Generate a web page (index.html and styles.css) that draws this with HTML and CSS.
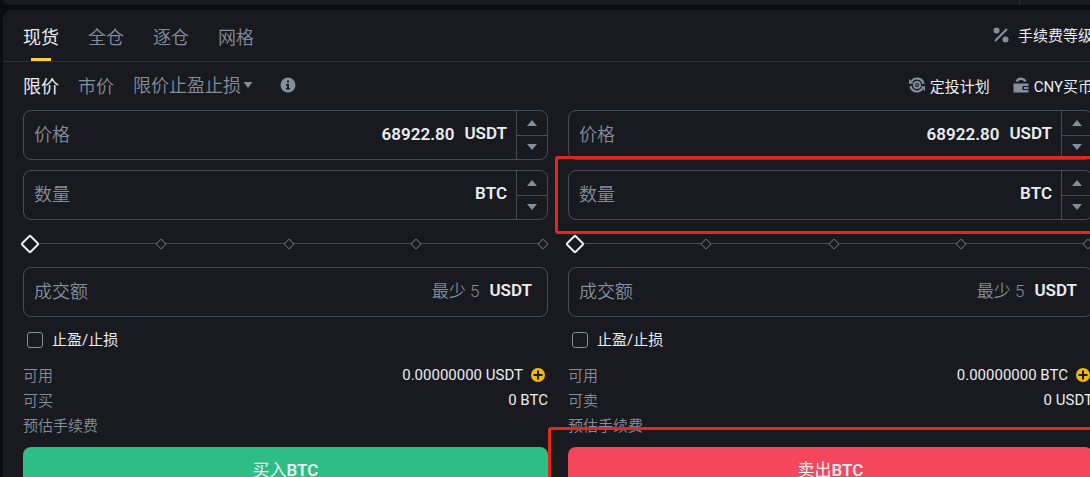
FILE: index.html
```html
<!DOCTYPE html>
<html lang="zh-CN">
<head>
  <meta charset="UTF-8">
  <meta name="viewport" content="width=device-width, initial-scale=1.0">
  <title>BTC/USDT 现货</title>
  <link rel="stylesheet" href="styles.css">
</head>
<body>
  <div class="chart-bottom"></div>
  <main class="panel">
    <nav class="tabs">
      <button class="tab active">现货</button>
      <button class="tab">全仓</button>
      <button class="tab">逐仓</button>
      <button class="tab">网格</button>
      <a class="tool push" href="#">
        <svg width="16" height="16" viewBox="0 0 16 16">
          <circle cx="3.5" cy="3.5" r="3" fill="currentColor"/>
          <circle cx="12.5" cy="12.5" r="3" fill="currentColor"/>
          <path d="M2 14L14 2" stroke="currentColor" stroke-width="2.2"/>
        </svg>
        手续费等级
      </a>
    </nav>
    <div class="order-types">
      <button class="type active">限价</button>
      <button class="type">市价</button>
      <div class="type-select">
        <select aria-label="订单类型">
          <option>限价止盈止损</option>
          <option>跟踪委托</option>
          <option>OCO</option>
        </select>
        <svg width="10" height="6" viewBox="0 0 10 6"><path d="M0.5 0h9L5 6z" fill="currentColor"/></svg>
      </div>
      <button class="info" aria-label="说明">
        <svg width="16" height="16" viewBox="0 0 16 16">
          <circle cx="8" cy="8" r="7.5" fill="#848e9c"/>
          <path d="M7 3.5h2v2H7zM6 7h3v4h1v1.5H6V11h1V8.500H6z" fill="#181a20"/>
        </svg>
      </button>
      <div class="tools push">
        <a class="tool" href="#">
          <svg width="16" height="16" viewBox="0 0 16 16" fill="none" stroke="currentColor">
            <path d="M2.500 4.500A6.600 6.600 0 0 1 14.500 7M13.500 11.500A6.600 6.600 0 0 1 1.500 9" stroke-width="2.200"/>
            <path d="M0 1.800v5h4.500zM16 14.200v-5h-4.500z" fill="currentColor" stroke="none"/>
            <circle cx="8" cy="8" r="3" stroke-width="2"/>
            <circle cx="8" cy="8" r="1" fill="currentColor" stroke="none"/>
          </svg>
          定投计划
        </a>
        <a class="tool" href="#">
          <svg width="16" height="16" viewBox="0 0 16 16">
            <path d="M3.500 4.500a5 5 0 0 1 9 0" fill="none" stroke="currentColor" stroke-width="2.400"/>
            <path d="M0.500 6.500h15v2.500H9.500v4h6V15.500H0.500z" fill="currentColor"/>
            <path d="M11 10h4.500v2h-4.500z" fill="currentColor"/>
          </svg>
          CNY买币
        </a>
      </div>
    </div>

    <div class="forms">
      <form class="order">
        <div class="field">
          <label for="buyPrice">价格</label>
          <input type="text" id="buyPrice" value="68922.80">
          <span class="unit">USDT</span>
          <div class="stepper">
            <button type="button" aria-label="增加"><span class="up"></span></button>
            <button type="button" aria-label="减少"><span class="down"></span></button>
          </div>
        </div>
        <div class="field">
          <label for="buyAmount">数量</label>
          <input type="text" id="buyAmount">
          <span class="unit">BTC</span>
          <div class="stepper">
            <button type="button" aria-label="增加"><span class="up"></span></button>
            <button type="button" aria-label="减少"><span class="down"></span></button>
          </div>
        </div>
        <div class="slider">
          <div class="marks"><i></i><i></i><i></i><i></i></div>
          <input type="range" min="0" max="100" value="0" aria-label="买入比例">
        </div>
        <div class="field total">
          <label for="buyTotal">成交额</label>
          <input type="text" id="buyTotal" placeholder="最少 5">
          <span class="unit">USDT</span>
        </div>
        <label class="check"><input type="checkbox"><span>止盈/止损</span></label>
        <dl class="summary">
          <div>
            <dt>可用</dt>
            <dd>0.00000000 USDT
              <button class="plus" type="button" aria-label="充值">
                <svg width="14" height="14" viewBox="0 0 14 14"><circle cx="7" cy="7" r="7" fill="#f0b90b"/><path d="M7 2.500v9M2.500 7h9" stroke="#181a20" stroke-width="2"/></svg>
              </button>
            </dd>
          </div>
          <div><dt>可买</dt><dd>0 BTC</dd></div>
          <div><dt>预估手续费</dt></div>
        </dl>
        <button class="submit buy" type="button">买入<b>BTC</b></button>
      </form>

      <form class="order">
        <div class="field">
          <label for="sellPrice">价格</label>
          <input type="text" id="sellPrice" value="68922.80">
          <span class="unit">USDT</span>
          <div class="stepper">
            <button type="button" aria-label="增加"><span class="up"></span></button>
            <button type="button" aria-label="减少"><span class="down"></span></button>
          </div>
        </div>
        <div class="marked mark-amount">
          <div class="field">
            <label for="sellAmount">数量</label>
            <input type="text" id="sellAmount">
            <span class="unit">BTC</span>
            <div class="stepper">
              <button type="button" aria-label="增加"><span class="up"></span></button>
              <button type="button" aria-label="减少"><span class="down"></span></button>
            </div>
          </div>
        </div>
        <div class="slider">
          <div class="marks"><i></i><i></i><i></i><i></i></div>
          <input type="range" min="0" max="100" value="0" aria-label="卖出比例">
        </div>
        <div class="field total">
          <label for="sellTotal">成交额</label>
          <input type="text" id="sellTotal" placeholder="最少 5">
          <span class="unit">USDT</span>
        </div>
        <label class="check"><input type="checkbox"><span>止盈/止损</span></label>
        <dl class="summary">
          <div>
            <dt>可用</dt>
            <dd>0.00000000 BTC
              <button class="plus" type="button" aria-label="充值">
                <svg width="14" height="14" viewBox="0 0 14 14"><circle cx="7" cy="7" r="7" fill="#f0b90b"/><path d="M7 2.500v9M2.500 7h9" stroke="#181a20" stroke-width="2"/></svg>
              </button>
            </dd>
          </div>
          <div><dt>可卖</dt><dd>0 USDT</dd></div>
          <div><dt>预估手续费</dt></div>
        </dl>
        <div class="marked mark-submit">
          <button class="submit sell" type="button">卖出<b>BTC</b></button>
        </div>
      </form>
    </div>
  </main>
</body>
</html>
```
FILE: styles.css
```css
* {
  box-sizing: border-box;
}
body {
  margin: 0;
  height: 100vh;
  overflow: hidden;
  background: #0b0e11;
  color: #eaecef;
  font-family: Roboto, "Noto Sans CJK SC", sans-serif;
  font-size: 15px;
}
button, input, select {
  font: inherit;
  color: inherit;
  background: none;
  border: none;
  padding: 0;
  margin: 0;
  outline: none;
}
button {
  cursor: pointer;
}
svg {
  display: block;
  flex: none;
}
.chart-bottom {
  height: 5px;
  margin: 0 70px 5px 3px;
  background: #181a20;
  border-right: 1px solid #2b3139;
  border-radius: 0 0 0 6px;
  box-shadow: 70px 0 #181a20;
}
/* the panel runs on past the right edge of the window */
.panel {
  margin: 0 -23px 0 3px;
  background: #181a20;
  border-radius: 8px;
}
.tabs {
  display: flex;
  gap: 29px;
  height: 52px;
  padding: 0 20px;
  border-bottom: 1px solid #2b3139;
}
.tab, .type, .type-select {
  color: #848e9c;
  font-size: 18px;
  font-weight: 350;
}
.tab.active {
  color: #eaecef;
  font-weight: 400;
  background: linear-gradient(#fcd535, #fcd535) bottom / 20px 3px no-repeat;
}
.type.active {
  color: #eaecef;
  font-weight: 400;
}
.order-types {
  display: flex;
  align-items: center;
  gap: 19px;
  height: 48px;
  padding: 0 20px 2px;
}
.type-select {
  display: flex;
  align-items: center;
  gap: 2px;
}
.type-select select {
  appearance: none;
}
.info {
  margin-left: 8px;
}
.tools {
  display: flex;
  gap: 23px;
}
.tool {
  display: flex;
  align-items: center;
  gap: 5px;
  color: #eaecef;
  text-decoration: none;
  white-space: nowrap;
}
.tool svg {
  color: #848e9c;
}
.tabs .tool {
  gap: 9px;
  padding-bottom: 2px;
}
.push {
  margin-left: auto;
}
.forms {
  display: grid;
  grid-template-columns: 1fr 1fr;
  gap: 20px;
  padding: 0 20px 20px;
}
.order {
  display: flex;
  flex-direction: column;
  min-width: 0;
}
.field {
  display: flex;
  align-items: center;
  height: 50px;
  margin-bottom: 10px;
  padding-left: 10px;
  border: 1px solid #474d57;
  border-radius: 8px;
}
.field label, .unit {
  padding-bottom: 5px;
}
.field label {
  color: #848e9c;
  font-size: 18px;
  font-weight: 350;
  white-space: nowrap;
}
.field input {
  flex: 1;
  min-width: 0;
  padding: 0 10px 3px 0;
  font-size: 17px;
  font-weight: 600;
  text-align: right;
}
.field input::placeholder {
  color: #848e9c;
  font-size: 17px;
  font-weight: 350;
}
.unit {
  font-size: 17px;
  font-weight: 600;
}
.stepper {
  display: flex;
  flex-direction: column;
  align-self: stretch;
  width: 31px;
  margin-left: 9px;
  border-left: 1px solid #474d57;
}
.stepper button {
  display: flex;
  flex: 1;
  align-items: center;
  justify-content: center;
}
.stepper button + button {
  border-top: 1px solid #474d57;
}
.up, .down {
  border: 5px solid transparent;
  border-top-width: 0;
  border-bottom: 6px solid #848e9c;
}
.down {
  border-top: 6px solid #848e9c;
  border-bottom-width: 0;
}
.total {
  padding-right: 15px;
}
.slider {
  display: grid;
  align-items: center;
  height: 27px;
  margin-bottom: 10px;
  background: linear-gradient(#474d57, #474d57) center / 100% 1px no-repeat;
}
.slider input, .marks {
  grid-area: 1 / 1;
}
.slider input {
  appearance: none;
  height: 14px;
}
.slider input::-webkit-slider-thumb {
  appearance: none;
  width: 14px;
  height: 14px;
  background: #181a20;
  border: 2px solid #eaecef;
  border-radius: 2px;
  transform: rotate(45deg);
}
.marks {
  display: grid;
  grid-template-columns: repeat(4, 1fr);
  justify-items: end;
  padding: 0 1px 0 15px;
}
.marks i {
  width: 8px;
  height: 8px;
  background: #181a20;
  border: 1px solid #5e6673;
  border-radius: 1px;
  transform: rotate(45deg);
}
.check {
  display: flex;
  align-items: center;
  gap: 9px;
  height: 26px;
  margin-bottom: 9px;
  padding-left: 4px;
}
.check span {
  padding-bottom: 3px;
}
.check input {
  appearance: none;
  width: 16px;
  height: 16px;
  border: 1px solid #848e9c;
  border-radius: 3px;
}
.summary {
  margin: 0 0 10px;
}
.summary div {
  display: flex;
  align-items: center;
  justify-content: space-between;
  height: 25px;
}
.summary dt {
  color: #848e9c;
  font-weight: 350;
}
.summary dd {
  display: flex;
  align-items: center;
  gap: 8px;
  margin: 0;
}
.plus {
  margin-right: 3px;
}
.submit {
  width: 100%;
  height: 42px;
  border-radius: 8px;
  font-size: 17px;
}
.submit b {
  font-weight: 600;
}
.buy {
  background: #2ebd85;
}
.sell {
  background: #f6465d;
}
/* red callout frames */
.marked {
  position: relative;
}
.marked::after {
  content: "";
  position: absolute;
  border: 3px solid #e0281f;
  border-radius: 3px;
  pointer-events: none;
}
.mark-amount::after {
  inset: -14px -13px -4px -13px;
}
.mark-submit::after {
  inset: -20px;
}
```
